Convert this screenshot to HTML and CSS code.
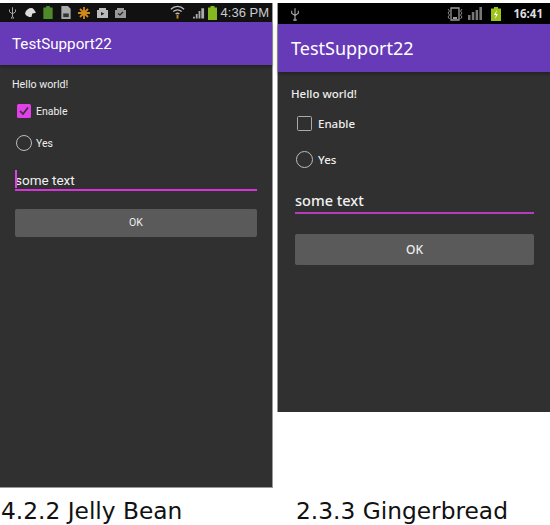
FILE: index.html
```html
<!DOCTYPE html>
<html lang="en">
<head>
<meta charset="utf-8">
<title>TestSupport22</title>
<link rel="stylesheet" href="styles.css">
</head>
<body>
<main class="compare">
  <section class="col col-jb">
    <div class="phone phone-jb">
      <div class="status">
        <div class="status-left">
          <svg class="ic" viewBox="0 0 12 16" width="9" height="13"><path d="M6 1v13M6 14a1.300 1.300 0 1 0 .01 0M2 4v3l4 3 4-3V4" fill="none" stroke="#aaa" stroke-width="1.300"/></svg>
          <svg class="ic" viewBox="0 0 14 12" width="13" height="11"><path d="M1 7C2 3 5 1 8 1c2 0 3 2 5 5-2 1-3 1-4 1l-1 4C5 11 2 10 1 7z" fill="#ddd"/></svg>
          <svg class="ic" viewBox="0 0 10 14" width="10" height="13"><path d="M3 0h4v1.500h3V14H0V1.500h3z" fill="#4f8a2a"/></svg>
          <svg class="ic" viewBox="0 0 12 14" width="12" height="13"><path d="M1 0h7l3 3v11H1z" fill="#aaa"/><path d="M3 8h6v4H3z" fill="#333"/></svg>
          <svg class="ic" viewBox="0 0 12 12" width="12" height="12"><path d="M6 0v12M0 6h12M2 2l8 8M10 2l-8 8" stroke="#d08a18" stroke-width="1.800"/></svg>
          <svg class="ic" viewBox="0 0 13 12" width="13" height="12"><path d="M3 3V1h7v2h2v8H1V3z" fill="#bbb"/><path d="M5 5l3.500 1.700L5 8.500z" fill="#222"/></svg>
          <svg class="ic" viewBox="0 0 13 12" width="13" height="12"><path d="M3 3V1h7v2h2v8H1V3z" fill="#999"/><path d="M4 6.500l2 1.500 3-3" fill="none" stroke="#222" stroke-width="1.200"/></svg>
        </div>
        <div class="status-right">
          <svg class="ic" viewBox="0 0 16 15" width="15" height="15"><path d="M1 4c4-4 10-4 14 0M3.500 6.500c3-2.500 6-2.500 9 0M6 9c1.500-1 2.500-1 4 0" fill="none" stroke="#bbb" stroke-width="1.400"/><path d="M8 10v4" stroke="#c98a20" stroke-width="2"/></svg>
          <svg class="ic ic-signal" viewBox="0 0 13 13" width="12" height="13"><path d="M0 11h2v2H0zM3 8h2v5H3zM6 5h2v8H6zM9 2h3v11H9z" fill="#aaa"/></svg>
          <svg class="ic" viewBox="0 0 9 14" width="9" height="14"><path d="M2.500 0h4v1.500H9V14H0V1.500h2.500z" fill="#86b820"/></svg>
          <span class="clock-jb">4:36 PM</span>
        </div>
      </div>
      <header class="appbar">TestSupport22</header>
      <div class="content">
        <p class="hello">Hello world!</p>
        <div class="opt opt-check">
          <svg class="box" viewBox="0 0 14 14" width="14" height="14"><rect width="14" height="14" rx="1.500" fill="#e040e8"/><path d="M3 7l3 3 5-6.500" fill="none" stroke="#333" stroke-width="1.700"/></svg>
          <span>Enable</span>
        </div>
        <div class="opt opt-radio">
          <span class="radio"></span>
          <span>Yes</span>
        </div>
        <div class="field"><span class="caret"></span>some text</div>
        <div class="btn">OK</div>
      </div>
    </div>
    <p class="caption">4.2.2 Jelly Bean</p>
  </section>
  <section class="col col-gb">
    <div class="phone phone-gb">
      <div class="status">
        <div class="status-left">
          <svg class="ic" viewBox="0 0 12 16" width="10" height="14"><path d="M6 1v13M6 14a1.300 1.300 0 1 0 .01 0M2 4v3l4 3 4-3V4" fill="none" stroke="#aaa" stroke-width="1.300"/></svg>
        </div>
        <div class="status-right">
          <svg class="ic" viewBox="0 0 18 14" width="18" height="14"><path d="M5 1h8v12H5z" fill="none" stroke="#999" stroke-width="1.300"/><path d="M7 10h4v2H7z" fill="#999"/><path d="M2 2l1.500 2L2 6l1.500 2L2 10l1.500 2M16 2l-1.500 2L16 6l-1.500 2L16 10l-1.500 2" fill="none" stroke="#888"/></svg>
          <svg class="ic gap-signal" viewBox="0 0 14 13" width="14" height="13"><path d="M0 8h2.500v5H0zM3.800 5h2.500v8H3.800zM7.600 3h2.500v10H7.600zM11.400 0h2.600v13h-2.600z" fill="#777"/></svg>
          <svg class="ic gap-batt" viewBox="0 0 10 14" width="10" height="14"><path d="M3 0h4v1.500h3V14H0V1.500h3z" fill="#9ac31c"/><path d="M6 3L3 8h2l-1 4 3-5H5z" fill="#fff"/></svg>
          <span class="clock-gb">16:41</span>
        </div>
      </div>
      <header class="appbar">TestSupport22</header>
      <div class="content">
        <p class="hello">Hello world!</p>
        <div class="opt opt-check">
          <span class="box-empty"></span>
          <span>Enable</span>
        </div>
        <div class="opt opt-radio">
          <span class="radio"></span>
          <span>Yes</span>
        </div>
        <div class="field">some text</div>
        <div class="btn">OK</div>
      </div>
    </div>
    <p class="caption">2.3.3 Gingerbread</p>
  </section>
</main>
</body>
</html>
```
FILE: styles.css
```css
html, body { margin: 0; padding: 0; background: #fff; }
body { width: 550px; height: 525px; overflow: hidden; }
.compare { display: flex; gap: 4px; align-items: stretch; height: 525px; box-sizing: border-box; padding-top: 3px; }
.col { display: flex; flex-direction: column; }
.col-jb { width: 273px; }
.col-gb { width: 273px; }
.phone { display: flex; flex-direction: column; background: #303030; box-sizing: border-box; }
.phone-jb { height: 485px; border-right: 1px solid #999; border-bottom: 1px solid #999; }
.phone-gb { height: 409px; border-left: 1px solid #999; }
.status { display: flex; justify-content: space-between; align-items: center; background: #000; flex: none; }
.status-left, .status-right { display: flex; align-items: center; }
.ic { display: block; flex: none; }
.appbar { background: #673ab7; color: #fff; flex: none; display: flex; align-items: center; box-shadow: 0 2px 3px rgba(0,0,0,.3); }
.content { display: flex; flex-direction: column; flex: 1; }
.hello { margin: 0; color: #eee; }
.opt { display: flex; align-items: center; color: #eee; }
.radio { display: block; box-sizing: border-box; border-radius: 50%; border: 1.500px solid #bdbdbd; flex: none; }
.field { color: #f2f2f2; position: relative; border-bottom: 2px solid #d633d9; }
.btn { background: #5a5a5a; border-radius: 2px; color: #eee; text-align: center; }
.caption { margin: 0; color: #111; font-family: "DejaVu Sans", sans-serif; font-size: 23.300px; line-height: 26px; white-space: nowrap; }

/* Jelly Bean */
.phone-jb { font-family: Roboto, sans-serif; }
.phone-jb .status { height: 19px; padding: 0 3px 0 3px; background: #111; }
.phone-jb .status-left { display: grid; grid-template-columns: repeat(7, 18px); justify-items: center; align-items: center; }
.phone-jb .status-right { gap: 3px; }
.ic-signal { margin-left: 5px; }
.clock-jb { color: #ccc; font-size: 13px; margin-left: 1px; font-family: "Liberation Sans", sans-serif; }
.phone-jb .appbar { height: 43px; padding-left: 12px; font-size: 15.200px; }
.phone-jb .content { padding: 13px 15px 0; }
.phone-jb .hello { font-size: 10.700px; line-height: 13px; margin-left: -3px; }
.phone-jb .opt { font-size: 10.500px; margin-left: 2px; }
.phone-jb .opt-check { height: 16px; margin-top: 12px; gap: 5px; }
.phone-jb .opt-radio { height: 16px; margin-top: 16px; gap: 4px; margin-left: 1px; }
.phone-jb .radio { width: 16px; height: 16px; }
.phone-jb .field { font-size: 13.500px; line-height: 18px; margin-top: 19px; padding-top: 1px; }
.caret { position: absolute; left: 0; top: 0; width: 1.500px; height: 18px; background: #e040e8; }
.phone-jb .btn { height: 28px; line-height: 28px; margin-top: 18px; font-size: 10.500px; font-weight: 400; }
.col-jb .caption { margin-top: 10px; padding-left: 1px; }

/* Gingerbread */
.phone-gb { font-family: "Noto Sans", "Open Sans", sans-serif; }
.phone-gb .status { height: 21px; padding: 0 7px 0 12px; }
.gap-signal { margin-left: 4px; }
.gap-batt { margin-left: 9px; }
.clock-gb { color: #ddd; font-size: 11.500px; font-weight: 700; margin-left: 12px; }
.phone-gb .appbar { height: 48px; padding-left: 13px; font-size: 18px; font-weight: 400; }
.phone-gb .content { padding: 14px 16px 0 17px; }
.phone-gb .hello { font-size: 11.500px; line-height: 15px; margin-left: -4px; font-weight: 500; }
.phone-gb .opt { font-size: 11.500px; margin-left: 2px; font-weight: 500; }
.phone-gb .opt-check { height: 16px; margin-top: 14px; gap: 6px; }
.phone-gb .opt-radio { height: 18px; margin-top: 19px; gap: 5px; margin-left: 1px; }
.box-empty { display: block; width: 15px; height: 15px; box-sizing: border-box; border: 1.500px solid #aaa; border-radius: 1.500px; flex: none; }
.phone-gb .radio { width: 17px; height: 17px; }
.phone-gb .field { font-size: 14.500px; line-height: 20px; margin-top: 22px; padding-bottom: 2px; border-bottom-color: #b53cbb; font-weight: 500; }
.phone-gb .btn { height: 31px; line-height: 31px; margin-top: 20px; font-size: 12px; font-weight: 500; }
.col-gb .caption { margin-top: 86px; padding-left: 19px; }
```
